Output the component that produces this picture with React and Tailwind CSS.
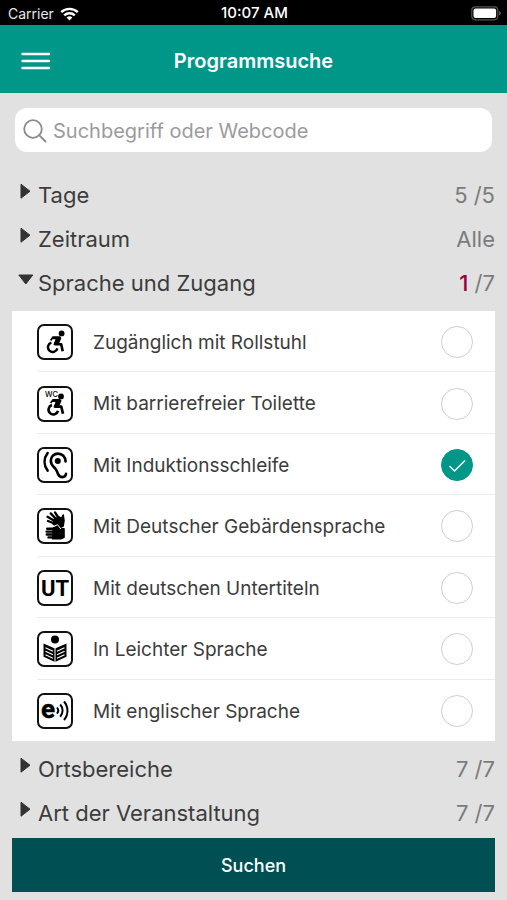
import { useState } from 'react';

const ICONS = {
  wheelchair: (
    <>
      <circle cx="24.600" cy="9.400" r="2.900" />
      <path d="M20.500 15l-2.300 5.200h6l1.500 7" fill="none" stroke="#000" strokeWidth="2.600" strokeLinejoin="round" />
      <path d="M15.600 12.300h7.400l1.400 1.800-2.800 6.600h-5.200l2.200-5.400h-3.200l-1 1.600-1.500-.9z" />
      <path d="M14.400 18.600a4.800 4.800 0 1 0 6 5.800" fill="none" stroke="#000" strokeWidth="2.400" />
    </>
  ),
  toilet: (
    <>
      <text x="8" y="10.500" fontSize="7.500" fontWeight="500">WC</text>
      <circle cx="24" cy="10.400" r="2.900" />
      <path d="M20.600 15.500l-2.300 5.200h6l1.700 7" fill="none" stroke="#000" strokeWidth="2.700" strokeLinejoin="round" />
      <path d="M15.600 12.900h7.400l1.600 1.800-2.800 6.500h-5.400l2.200-5.300h-3.200l-1 1.600-1.500-.9z" />
      <path d="M15 19.100a4.800 4.800 0 1 0 6 5.800" fill="none" stroke="#000" strokeWidth="2.600" />
    </>
  ),
  ear: (
    <g fill="none" stroke="#000" strokeWidth="2.600" strokeLinecap="round">
      <path d="M10.600 6c-4 5.400-4 12.200 0 17.600" />
      <path d="M28.600 14.400c-.2-4.600-3.400-7.800-7.600-7.800-4.200 0-7.200 3.200-7.200 7.200 0 4.200 2.700 5.800 4.700 8 1.500 1.700 1.700 3.500 2.600 5.300.9 1.900 2.300 3 4.300 3 2 0 3.300-1.200 3.600-3.200" />
      <circle cx="20.800" cy="14" r="3" fill="#000" stroke="none" />
    </g>
  ),
  hands: (
    <g stroke="#000" strokeLinecap="round" strokeLinejoin="round">
      <path d="M17 11.500l5-2.500 2.500 1.500 1.700-3.500.8 5.500-.8 5.500-4 2-6-4z" strokeWidth="1.600" />
      <path d="M18.500 16l-7.500-3M18.500 13.500l-8-4.700M20 12l-6.300-6.600M22 10.500l-4-6" strokeWidth="2.300" />
      <path d="M16.500 20l4-1.500 2.500 2 4 .2v8.600l-3 1.400h-8.500z" strokeWidth="1.600" />
      <path d="M18 20.700H10.200M18 23.600H9.600M18 26.500H9.800M18 29.400H11.500" strokeWidth="2.400" />
      <path d="M17.500 18l3-1.300 3.200 4" fill="none" stroke="#fff" strokeWidth="1" />
    </g>
  ),
  subtitles: (
    <text x="18" y="26" fontSize="22" fontWeight="700" textAnchor="middle" className="font-['Roboto',sans-serif]">UT</text>
  ),
  reading: (
    <>
      <circle cx="18" cy="8.600" r="4" />
      <path d="M6.500 12.500L18 17.500l11.500-5v13.300L18 31 6.500 25.800z" />
      <g fill="none" stroke="#fff" strokeWidth="1.200">
        <path d="M18 17v14" strokeWidth="1" />
        <path d="M8.500 16.800l7.500 3.400M8.500 20.300l7.500 3.400M8.500 23.800l7.500 3.400" />
        <path d="M27.500 16.800L20 20.200M27.500 20.300L20 23.700M27.500 23.800L20 27.200" />
      </g>
    </>
  ),
  english: (
    <>
      <text x="4" y="25" fontSize="26" fontWeight="700" stroke="#000" strokeWidth="0.500" className="font-['Roboto',sans-serif]">e</text>
      <g fill="none" stroke="#000" strokeWidth="2">
        <path d="M20 14.500a5 5 0 0 1 0 6.200" />
        <path d="M23.200 11.500a9 9 0 0 1 0 12.200" />
        <path d="M27 8.500a14 14 0 0 1 0 18.500" />
      </g>
    </>
  ),
};

const OPTIONS = [
  { id: 'wheelchair', label: 'Zugänglich mit Rollstuhl' },
  { id: 'toilet', label: 'Mit barrierefreier Toilette' },
  { id: 'ear', label: 'Mit Induktionsschleife' },
  { id: 'hands', label: 'Mit Deutscher Gebärdensprache' },
  { id: 'subtitles', label: 'Mit deutschen Untertiteln' },
  { id: 'reading', label: 'In Leichter Sprache' },
  { id: 'english', label: 'Mit englischer Sprache' },
];

function StatusBar() {
  return (
    <div className="grid h-[25px] grid-cols-3 items-center bg-black pt-0.5 pr-1.5 pl-2 text-white">
      <div className="flex items-center gap-1.5 text-sm text-gray-200">
        Carrier
        <svg width="19" height="14" viewBox="0 0 19 14" fill="none" stroke="#fff" strokeWidth="2.400">
          <path d="M1.200 5.200a12 12 0 0 1 16.600 0" />
          <path d="M4.200 8.400a7.600 7.600 0 0 1 10.600 0" />
          <path d="M9.500 13.500L6.600 10.600a4.200 4.200 0 0 1 5.800 0z" fill="#fff" stroke="none" />
        </svg>
      </div>
      <div className="text-center text-[15px] font-medium">10:07 AM</div>
      <svg className="justify-self-end" width="30" height="15" viewBox="0 0 30 15">
        <rect x="0.800" y="0.800" width="26" height="13" rx="3.500" fill="none" stroke="#555" strokeWidth="1.200" />
        <rect x="2.500" y="2.500" width="22.600" height="9.600" rx="2" fill="#fff" />
        <path d="M28.200 5v4.600c1-.5 1.600-1.300 1.600-2.300s-.6-1.800-1.600-2.300z" fill="#666" />
      </svg>
    </div>
  );
}

function Section({ title, open, onToggle, children }) {
  return (
    <button
      type="button"
      aria-expanded={open}
      onClick={onToggle}
      className="flex h-11 w-full items-center pr-3 pl-[18px] text-left text-[22px] text-[#3c3c3c]"
    >
      <svg className="mb-2 w-5 shrink-0" width="20" height="16" viewBox="0 0 20 16" fill="#333" stroke="#333" strokeLinejoin="round">
        {open ? <path d="M.8 4h14L7.800 13z" /> : <path d="M3 1.200v14L12 8.200z" />}
      </svg>
      <span className="flex-1">{title}</span>
      <span className="text-[#7b7b7b]">{children}</span>
    </button>
  );
}

function Option({ id, label, checked, onChange }) {
  return (
    <li className="flex items-center border-b border-[#ececec] pt-0.5 last:border-b-0">
      <svg className="shrink-0" width="36" height="36" viewBox="0 0 36 36">
        <rect x="1" y="1" width="34" height="34" rx="6" fill="#fff" stroke="#111" strokeWidth="2" />
        {ICONS[id]}
      </svg>
      <label htmlFor={id} className="flex-1 pt-0.5 pl-5 text-[19px] text-[#3c3c3c]">{label}</label>
      <span className="relative mr-[22px] flex">
        <input
          id={id}
          type="checkbox"
          checked={checked}
          onChange={onChange}
          className="size-8 appearance-none rounded-full border border-[#cfcfcf] checked:border-[#009688] checked:bg-[#009688]"
        />
        {checked && (
          <svg className="pointer-events-none absolute inset-0" width="32" height="32" viewBox="0 0 32 32" fill="none" stroke="#fff" strokeWidth="1.500">
            <path d="M8.500 17l5 5L24 11.500" />
          </svg>
        )}
      </span>
    </li>
  );
}

export default function App() {
  const [selected, setSelected] = useState(['ear']);
  const [open, setOpen] = useState('sprache');

  const toggleOption = (id) =>
    setSelected((prev) => (prev.includes(id) ? prev.filter((x) => x !== id) : [...prev, id]));
  const section = (key) => ({
    open: open === key,
    onToggle: () => setOpen((v) => (v === key ? null : key)),
  });

  return (
    <div className="flex min-h-screen flex-col bg-[#e1e1e1] font-['Inter',sans-serif]">
      <StatusBar />

      <header className="grid h-[68px] grid-cols-[1fr_auto_1fr] items-center bg-[#009688] px-5 pt-[3px] text-white">
        <button type="button" aria-label="Menü" className="justify-self-start">
          <svg width="31" height="20" viewBox="0 0 31 20" stroke="#fff" strokeWidth="2.500" strokeLinecap="round">
            <path d="M2.500 3h26.500M2.500 10h26.500M2.500 17h26.500" />
          </svg>
        </button>
        <h1 className="text-xl font-semibold">Programmsuche</h1>
      </header>

      <main className="flex-1 pt-[15px]">
        <div className="mx-[15px] flex h-11 items-center gap-1.5 rounded-xl bg-white pt-px pl-2">
          <svg width="24" height="24" viewBox="0 0 24 24" fill="none" stroke="#8a8a8a" strokeWidth="1.800" strokeLinecap="round">
            <circle cx="10" cy="10" r="8.800" />
            <path d="M16.300 16.300L22.500 22.500" />
          </svg>
          <input
            type="search"
            aria-label="Suchbegriff oder Webcode"
            placeholder="Suchbegriff oder Webcode"
            className="min-w-0 flex-1 bg-transparent text-xl text-[#3c3c3c] outline-none placeholder:text-[#9b9b9b]"
          />
        </div>

        <div className="pt-[21px]">
          <Section title="Tage" {...section('tage')}>5 /5</Section>
          <Section title="Zeitraum" {...section('zeitraum')}>Alle</Section>
          <Section title="Sprache und Zugang" {...section('sprache')}>
            <span className="font-medium text-[#96003c]">{selected.length}</span> /7
          </Section>
          {open === 'sprache' && (
            <ul className="mx-3 my-1.5 grid min-h-[430px] auto-rows-fr bg-white pl-[25px]">
              {OPTIONS.map((o) => (
                <Option
                  key={o.id}
                  {...o}
                  checked={selected.includes(o.id)}
                  onChange={() => toggleOption(o.id)}
                />
              ))}
            </ul>
          )}
          <Section title="Ortsbereiche" {...section('orte')}>7 /7</Section>
          <Section title="Art der Veranstaltung" {...section('art')}>7 /7</Section>
        </div>
      </main>

      <div className="px-3 pb-2">
        <button type="button" className="h-[54px] w-full bg-[#004f52] pt-0.5 text-lg font-medium text-white">
          Suchen
        </button>
      </div>
    </div>
  );
}
